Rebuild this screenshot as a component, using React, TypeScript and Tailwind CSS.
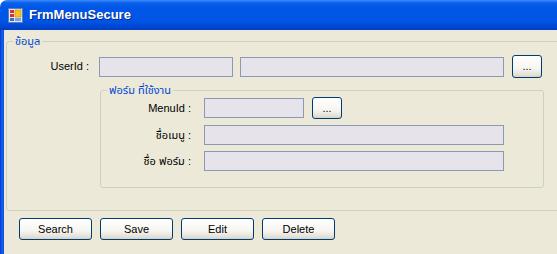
import React from "react";

const font = "font-['Liberation_Sans','Noto_Sans_Thai','Loma','Garuda','Noto_Sans',sans-serif]";

const TextBox: React.FC<{ className?: string }> = ({ className = "" }) => (
  <div className={`h-[20px] border border-[#8A9AB5] bg-[#E6E3EB] ${className}`} />
);

const XpButton: React.FC<{ label: string; className?: string }> = ({ label, className = "" }) => (
  <button
    className={`flex items-center justify-center rounded-[3px] border border-[#003C74] bg-[linear-gradient(to_bottom,#ffffff_0%,#f6f5f0_60%,#e3e0d5_90%,#d6d0c5_100%)] text-[11px] leading-none text-black ${className}`}
  >
    {label}
  </button>
);

const AppIcon = () => (
  <svg width="15" height="15" viewBox="0 0 15 15">
    <rect x="0.5" y="0.5" width="14" height="14" fill="#dfe8f5" stroke="#5a7fb8" />
    <rect x="2" y="2" width="4" height="3" fill="#d8302a" />
    <rect x="2" y="6" width="4" height="3" fill="#d8302a" />
    <rect x="2" y="10" width="4" height="3" fill="#3a6cc8" />
    <rect x="7" y="2" width="6" height="7" fill="#f5c220" stroke="#c98a10" strokeWidth="0.6" />
    <rect x="7" y="10" width="6" height="3" fill="#7fa0d8" />
  </svg>
);

export default function App() {
  return (
    <div className={`h-[254px] w-[557px] overflow-hidden bg-white text-[11px] text-black ${font}`}>
      {/* ---------- TITLE BAR ---------- */}
      <div className="flex h-[30px] items-center rounded-tl-[7px] bg-[linear-gradient(to_bottom,#3b8cff_0px,#0a5fea_3px,#0056e6_8px,#0055e5_21px,#0049d6_26px,#003dbf_30px)] pl-[8px]">
        <AppIcon />
        <span className="ml-[6px] text-[13px] font-bold text-white [text-shadow:1px_1px_0_#0a2a8a]">
          FrmMenuSecure
        </span>
      </div>

      <div className="flex h-[224px]">
        {/* left frame */}
        <div className="w-[4px] bg-[linear-gradient(to_right,#0831d9,#1663ea,#0a4fde)]" />

        <div className="flex-1 overflow-hidden bg-[#ECE9D8]">
          {/* ---------- GROUP ข้อมูล ---------- */}
          <fieldset className="ml-[2px] mt-[5px] w-[600px] min-w-0 rounded-[3px] border border-[#D0D0BF] pb-[22px]">
            <legend className="ml-[6px] px-[2px] leading-[13px] text-[#0046D5]">ข้อมูล</legend>

            <div className="mt-[7px] flex h-[23px] items-center">
              <span className="w-[82px] text-right">UserId :</span>
              <TextBox className="ml-[10px] w-[134px]" />
              <TextBox className="ml-[7px] w-[264px]" />
              <XpButton label="..." className="ml-[8px] h-[23px] w-[30px]" />
            </div>

            {/* ---------- GROUP ฟอร์ม ที่ใช้งาน ---------- */}
            <fieldset className="ml-[93px] mt-[6px] w-[444px] min-w-0 rounded-[3px] border border-[#D0D0BF] pb-[16px]">
              <legend className="ml-[6px] px-[2px] leading-[13px] text-[#0046D5]">ฟอร์ม ที่ใช้งาน</legend>

              <div className="flex h-[22px] items-center">
                <span className="w-[90px] text-right">MenuId :</span>
                <TextBox className="ml-[13px] w-[100px]" />
                <XpButton label="..." className="ml-[8px] h-[22px] w-[30px]" />
              </div>
              <div className="mt-[6px] flex h-[20px] items-center">
                <span className="w-[90px] text-right">ชื่อเมนู :</span>
                <TextBox className="ml-[13px] w-[300px]" />
              </div>
              <div className="mt-[6px] flex h-[20px] items-center">
                <span className="w-[90px] text-right">ชื่อ ฟอร์ม :</span>
                <TextBox className="ml-[13px] w-[300px]" />
              </div>
            </fieldset>
          </fieldset>

          {/* ---------- BUTTONS ---------- */}
          <div className="ml-[15px] mt-[7px] flex gap-[8px]">
            {["Search", "Save", "Edit", "Delete"].map((b) => (
              <XpButton key={b} label={b} className="h-[22px] w-[73px]" />
            ))}
          </div>
        </div>
      </div>
    </div>
  );
}
